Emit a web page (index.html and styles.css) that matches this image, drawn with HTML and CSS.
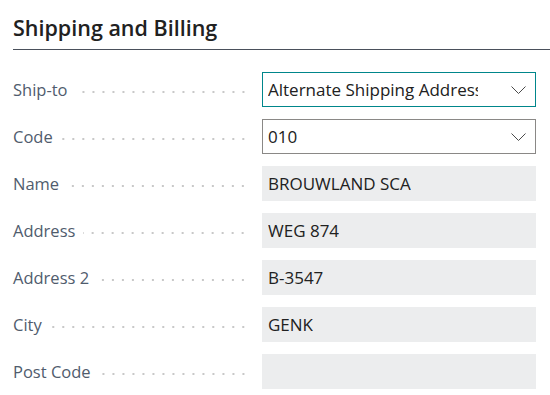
FILE: index.html
```html
<!DOCTYPE html>
<html lang="en">
<head>
    <meta charset="UTF-8">
    <title>Shipping and Billing</title>
    <link rel="stylesheet" href="styles.css">
</head>
<body>
    <div class="group">
        <h2 class="group-title">Shipping and Billing</h2>
        <div class="fields">
            <div class="row">
                <div class="caption"><span>Ship-to</span><i class="leader"></i></div>
                <div class="field select focused">
                    <span class="value">Alternate Shipping Address</span>
                    <svg class="chevron" width="15" height="8" viewBox="0 0 15 8"><path d="M0.5 0.5 L7.5 7.5 L14.5 0.5" fill="none" stroke="#4a4a4a" stroke-width="1"/></svg>
                </div>
            </div>
            <div class="row">
                <div class="caption"><span>Code</span><i class="leader"></i></div>
                <div class="field select">
                    <span class="value">010</span>
                    <svg class="chevron" width="15" height="8" viewBox="0 0 15 8"><path d="M0.5 0.5 L7.5 7.5 L14.5 0.5" fill="none" stroke="#4a4a4a" stroke-width="1"/></svg>
                </div>
            </div>
            <div class="row">
                <div class="caption"><span>Name</span><i class="leader"></i></div>
                <div class="field readonly"><span class="value">BROUWLAND SCA</span></div>
            </div>
            <div class="row">
                <div class="caption"><span>Address</span><i class="leader"></i></div>
                <div class="field readonly"><span class="value">WEG 874</span></div>
            </div>
            <div class="row">
                <div class="caption"><span>Address 2</span><i class="leader"></i></div>
                <div class="field readonly"><span class="value">B-3547</span></div>
            </div>
            <div class="row">
                <div class="caption"><span>City</span><i class="leader"></i></div>
                <div class="field readonly"><span class="value">GENK</span></div>
            </div>
            <div class="row">
                <div class="caption"><span>Post Code</span><i class="leader"></i></div>
                <div class="field readonly"><span class="value"></span></div>
            </div>
        </div>
    </div>
</body>
</html>
```

FILE: styles.css
```css
body {
    margin: 0;
    background-color: #fff;
    font-family: "Open Sans", "Noto Sans", sans-serif;
    color: #212121;
}
.group {
    padding: 0 0 0 13px;
}
.group-title {
    margin: 0;
    padding: 15px 0 8px 0;
    font-size: 21.5px;
    font-weight: 600;
    line-height: 26px;
    color: #212121;
    border-bottom: 1px solid #4a505b;
}
.fields {
    display: flex;
    flex-direction: column;
    gap: 12px;
    padding-top: 22px;
}
.row {
    display: flex;
    height: 35px;
}
.caption {
    width: 249px;
    display: flex;
    align-items: center;
    font-size: 16.5px;
    color: #505c6d;
}
.caption .leader {
    flex: 1;
    height: 4px;
    margin: 4px 14px 0 8px;
    background-image: radial-gradient(circle, #c8c8c8 1px, transparent 1.3px);
    background-size: 10px 4px;
    background-position: right center;
    background-repeat: repeat-x;
}
.field {
    width: 274px;
    box-sizing: border-box;
    display: flex;
    align-items: center;
    padding: 0 6px;
    font-size: 17px;
    overflow: hidden;
}
.field .value {
    white-space: nowrap;
    overflow: hidden;
}
.field.select {
    border: 1px solid #8a8886;
    padding: 0 9px 0 5px;
}
.field.select .value {
    flex: 1;
    margin-right: 33px;
}
.field.focused {
    border-color: #00868b;
}
.field.readonly {
    background-color: #ecedee;
}
.chevron {
    flex: none;
}
```
